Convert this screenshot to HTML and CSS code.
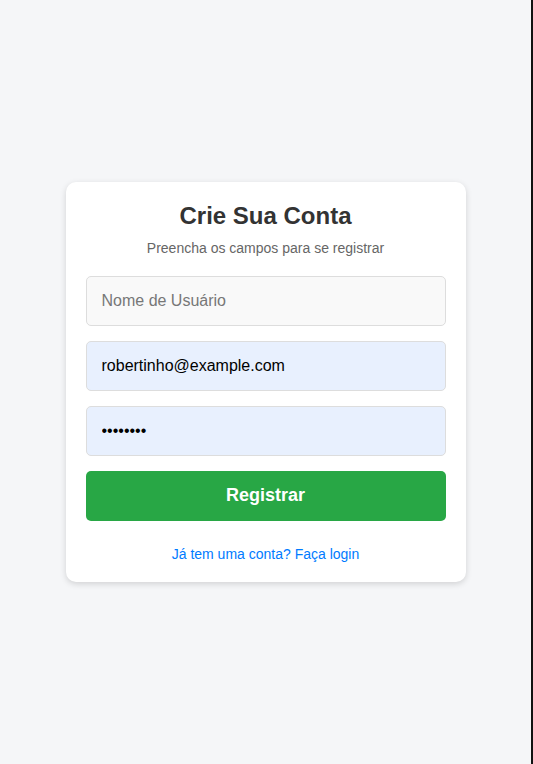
FILE: index.html
```html
<!DOCTYPE html>
<html lang="pt-BR">
<head>
<meta charset="utf-8">
<title>Crie Sua Conta</title>
<link rel="stylesheet" href="styles.css">
</head>
<body>
<div class="page">
  <main class="card">
    <h2 class="title">Crie Sua Conta</h2>
    <p class="subtitle">Preencha os campos para se registrar</p>
    <form class="form">
      <input class="field" type="text" placeholder="Nome de Usuário">
      <input class="field filled" type="email" value="robertinho@example.com">
      <input class="field filled" type="password" value="12345678">
      <button class="btn" type="button">Registrar</button>
    </form>
    <p class="footer"><a class="link" href="#">Já tem uma conta? Faça login</a></p>
  </main>
</div>
</body>
</html>
```
FILE: styles.css
```css
* { box-sizing: border-box; }
html, body { margin: 0; padding: 0; height: 100%; }
body {
  font-family: "Liberation Sans", Arial, sans-serif;
  background: #f5f6f8;
}
.page {
  height: 764px;
  border-right: 2px solid #111;
  display: flex;
  justify-content: center;
  align-items: flex-start;
  padding-top: 182px;
}
.card {
  width: 400px;
  background: #fff;
  border-radius: 10px;
  box-shadow: 0 2px 6px rgba(0, 0, 0, 0.15);
  padding: 20px;
  text-align: center;
}
.title {
  margin: 0 0 10px;
  font-size: 24px;
  line-height: 28px;
  font-weight: bold;
  color: #333;
}
.subtitle {
  margin: 0 0 20px;
  font-size: 14px;
  line-height: 16px;
  color: #666;
}
.form {
  display: flex;
  flex-direction: column;
  gap: 15px;
}
.field {
  height: 50px;
  width: 100%;
  padding: 0 15px;
  font-family: "Liberation Sans", Arial, sans-serif;
  font-size: 16px;
  color: #000;
  background: #f9f9f9;
  border: 1px solid #ddd;
  border-radius: 5px;
  outline: none;
}
.field::placeholder { color: #777; }
.field.filled { background: #e8f0fe; }
.btn {
  height: 50px;
  width: 100%;
  border: none;
  border-radius: 5px;
  background: #28a745;
  color: #fff;
  font-family: "Liberation Sans", Arial, sans-serif;
  font-size: 18px;
  line-height: 20px;
  font-weight: bold;
  padding: 0 0 2px;
}
.footer {
  margin: 25px 0 0;
  font-size: 14px;
  line-height: 16px;
}
.link {
  color: #007bff;
  text-decoration: none;
}
```
